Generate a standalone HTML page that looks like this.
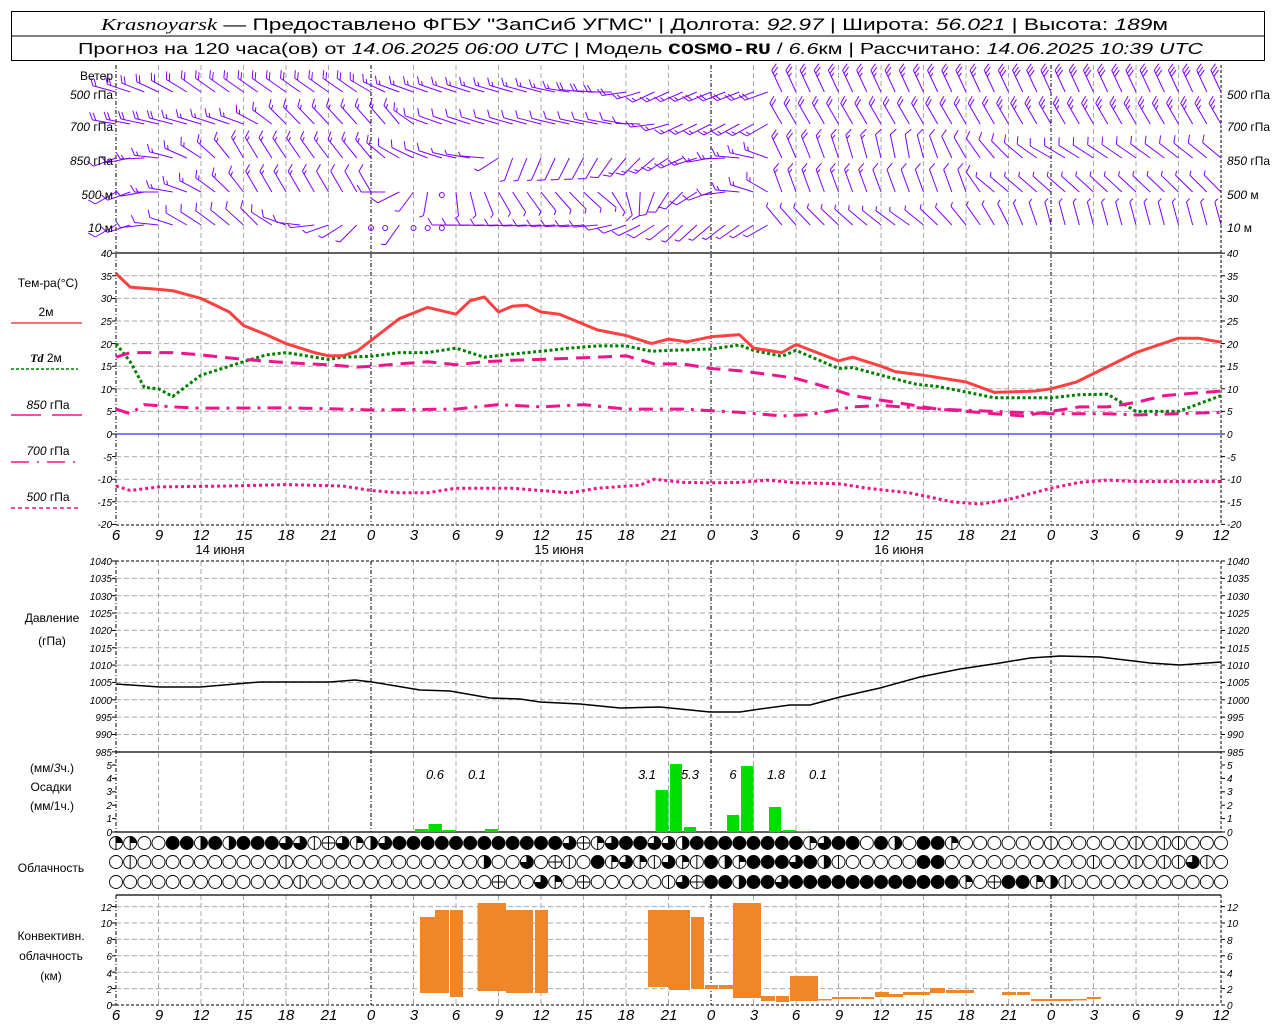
<!DOCTYPE html>
<html><head><meta charset="utf-8"><style>
html,body{margin:0;padding:0;background:#fff;}
svg{display:block;}
text{font-family:"Liberation Sans",sans-serif;fill:#000;}
.ax{font-style:italic;font-size:10px;}
.xl{font-style:italic;font-size:15px;}
.lb{font-size:12px;}
</style></head><body>
<svg id="s" width="1280" height="1024" viewBox="0 0 1280 1024" xmlns="http://www.w3.org/2000/svg">
<rect width="1280" height="1024" fill="#fff"/>
<g id="g"></g>
<!-- header -->
<rect x="11.5" y="11.5" width="1253" height="49" fill="none" stroke="#000"/>
<line x1="11" y1="36" x2="1265" y2="36" stroke="#000"/>
<text x="101" y="30" font-size="17" textLength="1067" lengthAdjust="spacingAndGlyphs"><tspan font-family="Liberation Serif" font-style="italic">Krasnoyarsk</tspan> — Предоставлено ФГБУ "ЗапСиб УГМС" | Долгота: <tspan font-style="italic">92.97</tspan> | Широта: <tspan font-style="italic">56.021</tspan> | Высота: <tspan font-style="italic">189</tspan>м</text>
<text x="78" y="54" font-size="16" textLength="1125" lengthAdjust="spacingAndGlyphs">Прогноз на 120 часа(ов) от <tspan font-style="italic">14.06.2025 06:00 UTC</tspan>  | Модель <tspan font-family="Liberation Mono" font-weight="bold">COSMO-RU</tspan> / <tspan font-style="italic">6.6</tspan>км | Рассчитано: <tspan font-style="italic">14.06.2025 10:39 UTC</tspan></text>

<!-- wind labels -->
<g class="lb" font-size="11">
<text x="113" y="80" text-anchor="end">Ветер</text>
<text x="113" y="99" text-anchor="end"><tspan font-style="italic">500</tspan> гПа</text>
<text x="113" y="131" text-anchor="end"><tspan font-style="italic">700</tspan> гПа</text>
<text x="113" y="165" text-anchor="end"><tspan font-style="italic">850</tspan> гПа</text>
<text x="113" y="199" text-anchor="end"><tspan font-style="italic">500</tspan> м</text>
<text x="113" y="232" text-anchor="end"><tspan font-style="italic">10</tspan>   м</text>
<text x="1227" y="99"><tspan font-style="italic">500</tspan> гПа</text>
<text x="1227" y="131"><tspan font-style="italic">700</tspan> гПа</text>
<text x="1227" y="165"><tspan font-style="italic">850</tspan> гПа</text>
<text x="1227" y="199"><tspan font-style="italic">500</tspan> м</text>
<text x="1227" y="232"><tspan font-style="italic">10</tspan>   м</text>
</g>

<!-- temperature legend -->
<g font-size="12">
<text x="48" y="287" text-anchor="middle">Тем-ра(°С)</text>
<text x="46" y="316" text-anchor="middle">2м</text>
<text x="46" y="362" text-anchor="middle"><tspan font-family="Liberation Serif" font-style="italic" font-weight="bold">Td</tspan>   2м</text>
<text x="48" y="409" text-anchor="middle"><tspan font-style="italic">850</tspan> гПа</text>
<text x="48" y="455" text-anchor="middle"><tspan font-style="italic">700</tspan> гПа</text>
<text x="48" y="501" text-anchor="middle"><tspan font-style="italic">500</tspan> гПа</text>
</g>
<line x1="11" y1="323" x2="82" y2="323" stroke="#ff4040" stroke-width="1.5"/>
<line x1="11" y1="369" x2="78" y2="369" stroke="#008000" stroke-width="1.5" stroke-dasharray="3,2"/>
<line x1="11" y1="415" x2="82" y2="415" stroke="#f0148c" stroke-width="1.5" stroke-dasharray="30,11"/>
<line x1="11" y1="462" x2="78" y2="462" stroke="#f0148c" stroke-width="1.5" stroke-dasharray="18,8,2,8"/>
<line x1="11" y1="508" x2="78" y2="508" stroke="#f0148c" stroke-width="1.5" stroke-dasharray="4,3"/>

<g font-size="12" text-anchor="middle">
<text x="52" y="622">Давление</text>
<text x="52" y="645">(гПа)</text>
<text x="52" y="772">(мм/<tspan font-style="italic">3</tspan>ч.)</text>
<text x="51" y="791">Осадки</text>
<text x="52" y="810">(мм/1ч.)</text>
<text x="51" y="872">Облачность</text>
<text x="51" y="940">Конвективн.</text>
<text x="51" y="960">облачность</text>
<text x="51" y="980">(км)</text>
</g>

<!-- temp axis labels -->
<g class="ax" text-anchor="end">
<text x="112" y="257">40</text><text x="112" y="280">35</text><text x="112" y="302">30</text><text x="112" y="325">25</text><text x="112" y="348">20</text><text x="112" y="370">15</text><text x="112" y="393">10</text><text x="112" y="415">5</text><text x="112" y="438">0</text><text x="112" y="461">-5</text><text x="112" y="483">-10</text><text x="112" y="506">-15</text><text x="112" y="528">-20</text>
</g>
<g class="ax">
<text x="1227" y="257">40</text><text x="1227" y="280">35</text><text x="1227" y="302">30</text><text x="1227" y="325">25</text><text x="1227" y="348">20</text><text x="1227" y="370">15</text><text x="1227" y="393">10</text><text x="1227" y="415">5</text><text x="1227" y="438">0</text><text x="1227" y="461">-5</text><text x="1227" y="483">-10</text><text x="1227" y="506">-15</text><text x="1227" y="528">-20</text>
</g>
<!-- pressure labels -->
<g class="ax" text-anchor="end" font-size="9">
<text x="112" y="565">1040</text><text x="112" y="582">1035</text><text x="112" y="600">1030</text><text x="112" y="617">1025</text><text x="112" y="634">1020</text><text x="112" y="652">1015</text><text x="112" y="669">1010</text><text x="112" y="686">1005</text><text x="112" y="704">1000</text><text x="112" y="721">995</text><text x="112" y="738">990</text><text x="112" y="756">985</text>
</g>
<g class="ax" font-size="9">
<text x="1227" y="565">1040</text><text x="1227" y="582">1035</text><text x="1227" y="600">1030</text><text x="1227" y="617">1025</text><text x="1227" y="634">1020</text><text x="1227" y="652">1015</text><text x="1227" y="669">1010</text><text x="1227" y="686">1005</text><text x="1227" y="704">1000</text><text x="1227" y="721">995</text><text x="1227" y="738">990</text><text x="1227" y="756">985</text>
</g>
<!-- precip labels -->
<g class="ax" text-anchor="end">
<text x="112" y="769">5</text><text x="112" y="782">4</text><text x="112" y="795">3</text><text x="112" y="809">2</text><text x="112" y="822">1</text><text x="112" y="836">0</text>
</g>
<g class="ax">
<text x="1227" y="769">5</text><text x="1227" y="782">4</text><text x="1227" y="795">3</text><text x="1227" y="809">2</text><text x="1227" y="822">1</text><text x="1227" y="836">0</text>
</g>
<g font-style="italic" font-size="13" text-anchor="middle">
<text x="435" y="779">0.6</text><text x="477" y="779">0.1</text><text x="647" y="779">3.1</text><text x="690" y="779">5.3</text><text x="733" y="779">6</text><text x="776" y="779">1.8</text><text x="818" y="779">0.1</text>
</g>
<!-- conv labels -->
<g class="ax" text-anchor="end">
<text x="112" y="911">12</text><text x="112" y="927">10</text><text x="112" y="944">8</text><text x="112" y="960">6</text><text x="112" y="977">4</text><text x="112" y="993">2</text><text x="112" y="1009">0</text>
</g>
<g class="ax">
<text x="1227" y="911">12</text><text x="1227" y="927">10</text><text x="1227" y="944">8</text><text x="1227" y="960">6</text><text x="1227" y="977">4</text><text x="1227" y="993">2</text><text x="1227" y="1009">0</text>
</g>
<!-- x labels -->
<g class="xl" text-anchor="middle">
<text x="116" y="540">6</text><text x="159" y="540">9</text><text x="201" y="540">12</text><text x="244" y="540">15</text><text x="286" y="540">18</text><text x="329" y="540">21</text><text x="371" y="540">0</text><text x="414" y="540">3</text><text x="456" y="540">6</text><text x="499" y="540">9</text><text x="541" y="540">12</text><text x="584" y="540">15</text><text x="626" y="540">18</text><text x="669" y="540">21</text><text x="711" y="540">0</text><text x="754" y="540">3</text><text x="796" y="540">6</text><text x="839" y="540">9</text><text x="881" y="540">12</text><text x="924" y="540">15</text><text x="966" y="540">18</text><text x="1009" y="540">21</text><text x="1051" y="540">0</text><text x="1094" y="540">3</text><text x="1136" y="540">6</text><text x="1179" y="540">9</text><text x="1221" y="540">12</text>
</g>
<g font-size="13" text-anchor="middle">
<text x="220" y="554">14 июня</text><text x="559" y="554">15 июня</text><text x="899" y="554">16 июня</text>
</g>
<g class="xl" text-anchor="middle">
<text x="116" y="1020">6</text><text x="159" y="1020">9</text><text x="201" y="1020">12</text><text x="244" y="1020">15</text><text x="286" y="1020">18</text><text x="329" y="1020">21</text><text x="371" y="1020">0</text><text x="414" y="1020">3</text><text x="456" y="1020">6</text><text x="499" y="1020">9</text><text x="541" y="1020">12</text><text x="584" y="1020">15</text><text x="626" y="1020">18</text><text x="669" y="1020">21</text><text x="711" y="1020">0</text><text x="754" y="1020">3</text><text x="796" y="1020">6</text><text x="839" y="1020">9</text><text x="881" y="1020">12</text><text x="924" y="1020">15</text><text x="966" y="1020">18</text><text x="1009" y="1020">21</text><text x="1051" y="1020">0</text><text x="1094" y="1020">3</text><text x="1136" y="1020">6</text><text x="1179" y="1020">9</text><text x="1221" y="1020">12</text>
</g>
</svg>
<script>
(function(){
var NS="http://www.w3.org/2000/svg",g=document.getElementById("g");
function el(n,a){var e=document.createElementNS(NS,n);for(var k in a)e.setAttribute(k,a[k]);g.appendChild(e);return e;}
function X(h){return 116+h*14.167;}
function ln(x1,y1,x2,y2,c,w,d){var a={x1:x1,y1:y1,x2:x2,y2:y2,stroke:c,"stroke-width":w||1};if(d)a["stroke-dasharray"]=d;return el("line",a);}
var G="#aaa",GD="5,3";
var segs=[[65,525],[561,832],[895,1005]];
for(var h=3;h<78;h+=3){if(h==18||h==42||h==66)continue;segs.forEach(function(s){ln(X(h),s[0],X(h),s[1],G,1,GD);});}
[0,18,42,66].forEach(function(h){segs.forEach(function(s){ln(X(h),s[0],X(h),s[1],"#000",1,"4,2,1,2");});});
segs.forEach(function(s){ln(X(78),s[0],X(78),s[1],"#000",1,"3,2");});
for(var t=35;t>-20;t-=5){var y=434-t*4.52;if(t==0)ln(116,y,1221,y,"#0000ff",1);else ln(116,y,1221,y,G,1,GD);}
ln(116,253,1221,253,"#000",1.2);ln(116,525,1221,525,"#000",1,"3,2");
for(var p=1035;p>985;p-=5){var y=561+(1040-p)*3.47;ln(116,y,1221,y,G,1,GD);}
ln(116,561,1221,561,"#000",1,"3,2");ln(116,752,1221,752,"#000",1.2);
ln(116,832,1221,832,"#000",1.2);
for(var c=2;c<=12;c+=2){var y=1005-c*8.2;ln(116,y,1221,y,G,1,GD);}
ln(116,895,1221,895,"#000",1.2);ln(116,1005,1221,1005,"#000",1,"3,2");
function ticks(vals,x1,x2){vals.forEach(function(y){ln(x1,y,x2,y,"#000",1);});}
var tl=[];for(var t=40;t>=-20;t-=5)tl.push(434-t*4.52);ticks(tl,112,116);ticks(tl,1221,1225);
var pl=[];for(var p=1040;p>=985;p-=5)pl.push(561+(1040-p)*3.47);ticks(pl,112,116);ticks(pl,1221,1225);
var rl=[];for(var r=0;r<=5;r++)rl.push(832-r*13.4);ticks(rl,112,116);ticks(rl,1221,1225);
var cl=[];for(var c=0;c<=12;c+=2)cl.push(1005-c*8.2);ticks(cl,112,116);ticks(cl,1221,1225);
function tline(pts,col,dash){var s=pts.map(function(p){return X(p[0]).toFixed(1)+","+(434-p[1]*4.52).toFixed(1);}).join(" ");var a={points:s,fill:"none",stroke:col,"stroke-width":3,"stroke-linejoin":"round"};if(dash)a["stroke-dasharray"]=dash;el("polyline",a);}
tline([[0,20],[1,16],[2,10.3],[3,10],[4,8.3],[6,13],[9,16],[10.6,17.5],[12,18],[14,17],[15,16.5],[16,17],[18,17.2],[20,18],[22,18],[24,19],[26,17],[28,17.7],[30,18.3],[32,19],[34,19.5],[36,19.5],[37.8,18.3],[39,18.5],[42,18.8],[44,19.7],[45,18.5],[47,17.2],[48,18.5],[51,14.5],[52,14.7],[54,13],[56.5,11],[58,10.5],[60,9.3],[62,8],[66,8],[68,8.7],[70,8.8],[72,5],[75,5],[78,8.5]],"#008000","3,2.5");
tline([[0,17],[1,18],[4,18],[6,17.5],[9,16.5],[12,15.8],[15,15.3],[17,14.8],[18,15],[20,15.5],[22,16],[24,15.3],[26,16],[28,16.3],[30,16.5],[34,17],[36,17.3],[38,15.5],[40,15.5],[42,14.5],[44,14],[46,13.2],[48,12.3],[50,10.5],[52,8.5],[54,7.5],[56,6.5],[58,5.5],[60,5],[62,4.5],[64,4],[66,5],[68,6],[70,6],[72,7],[74,8.5],[76,9],[78,9.5]],"#f0148c","14,8");
tline([[0,5.5],[1,4.5],[2,6.5],[4,6],[6,5.7],[12,5.8],[16,5.5],[18,5.3],[24,5.5],[27,6.5],[30,6],[33,6.5],[36,5.5],[40,5.5],[44,4.8],[47,4],[49,4.3],[52,6],[54,6.3],[58,5.5],[62,5],[66,4.5],[70,4.5],[72,4.2],[75,4.5],[78,4.8]],"#f0148c","14,7,3,7");
tline([[0,-11.5],[1,-12.5],[3,-11.7],[8,-11.5],[12,-11.2],[16,-11.5],[18,-12.5],[20,-13],[22,-13],[24,-12],[28,-12],[30,-12.5],[32,-13],[34,-12],[37,-11.3],[38,-10],[40,-10.7],[42,-10.8],[44,-10.7],[46,-10.2],[48,-10.8],[51,-11],[53,-12],[56,-13],[59,-15],[61,-15.5],[63,-14.5],[66,-12],[68,-10.7],[70,-10.2],[72,-10.5],[74,-10.5],[78,-10.5]],"#f0148c","3,3");
tline([[0,35.5],[1,32.5],[3,32],[4,31.7],[6,30],[8,27],[9,24],[10.6,22],[12,20],[14,18],[15,17.3],[16,17.3],[17,18.3],[18,20.7],[20,25.5],[22,28],[24,26.5],[25,29.5],[26,30.3],[27,27],[28,28.3],[29,28.5],[30,27],[31.3,26.5],[34,23],[36,21.8],[37.8,20],[39,21],[40.3,20.4],[42,21.5],[44,22],[45,19],[47,18],[48,19.8],[51,16.2],[52,17],[54,15],[55,13.8],[57,13],[60,11.5],[62,9.2],[64.8,9.5],[66,10],[67.8,11.5],[72,18],[75,21.2],[76.4,21.2],[78,20.3]],"#ff4040",null);
var pp=[[116,684],[160,687],[200,687],[260,682],[300,682],[330,682],[355,680],[372,682],[420,690],[450,691],[490,698],[520,699],[540,702],[580,704],[620,708],[660,707],[690,710],[710,712],[740,712],[760,709],[790,705],[810,705],[840,697],[880,688],[920,677],[960,669],[1000,663],[1030,658],[1060,656],[1100,657],[1150,663],[1180,665],[1221,662]];
el("polyline",{points:pp.map(function(p){return p.join(",");}).join(" "),fill:"none",stroke:"#000","stroke-width":1.5});
[[415,428,829],[428.5,442,824],[442.5,456,830],[485,498,829],[655.5,668.5,790],[670,682,764],[684,696,827],[727,739,815],[741,753.5,766],[769,781,807],[783,796,830],[797,810,831]].forEach(function(b){el("rect",{x:b[0],y:b[2],width:b[1]-b[0],height:832-b[2],fill:"#00dd00"});});
[[420,435,917,993],[435,449,910,993],[450,463,910,997],[477.5,506,903,991],[506,533,910,993],[535,548,910,993],[648,669,910,987],[669,690,910,990],[691,704,917,989],[705,718,985,989],[719,733,985,989],[733,761,903,998],[761,775,996,1001],[776,789,996,1002],[790,818,976,1001],[818,832,999,1000.5],[832,846,997,999],[846,860,997,999],[861,874,997,999],[875,889,992,997],[889,903,994,997],[903,930,992,995],[930,945,988,993],[946,974,990,993],[1002,1016,992,995],[1017,1030,992,995],[1031,1045,999,1001],[1045,1073,999,1001],[1073,1087,999,1000],[1087,1101,997,999]].forEach(function(b){el("rect",{x:b[0],y:b[2],width:b[1]-b[0],height:Math.max(1.5,b[3]-b[2]),fill:"#f0862a"});});
var rows=[
["qqoo##h#h###tt|etqht############teqt##"+"tth########qt##o#ho##q"+"oooooo|ooooo|o||ooo",843],
["o|oooooooooo|ooooooooooooohootoe|o#qtq"+"|tq|#hq###t#h|ooooo##"+"oooooooooo|oo|o||t|",862],
["ooooooooooooo|oooooooooooooeoo"+"tqoeooooo|"+"te##h##t############qoe##qh|"+"oooooooooooo",882]];
function cs(cx,cy,t){var r=6.5;
 el("circle",{cx:cx,cy:cy,r:r,fill:t=="#"?"#000":"#fff",stroke:"#000","stroke-width":0.9});
 if(t=="h")el("path",{d:"M"+cx+","+(cy-r)+" A"+r+","+r+" 0 0 1 "+cx+","+(cy+r)+"Z",fill:"#000"});
 if(t=="q")el("path",{d:"M"+cx+","+cy+" L"+cx+","+(cy-r)+" A"+r+","+r+" 0 0 1 "+(cx+r)+","+cy+"Z",fill:"#000"});
 if(t=="t")el("path",{d:"M"+cx+","+cy+" L"+cx+","+(cy-r)+" A"+r+","+r+" 0 1 1 "+(cx-r)+","+cy+"Z",fill:"#000"});
 if(t=="|"||t=="h"||t=="q"||t=="t")ln(cx,cy-r,cx,cy+r,"#000",1);
 if(t=="e"){ln(cx-r,cy,cx+r,cy,"#000",1);ln(cx,cy-r,cx,cy+r,"#000",1);}
}
rows.forEach(function(rw){var s=rw[0];for(var i=0;i<79;i++){var c=s.charAt(i)||"o";cs(X(i),rw[1],c);}});
var P="#8000ff";
function interp(k,h){for(var i=0;i<k.length-1;i++){if(h>=k[i][0]&&h<=k[i+1][0]){var f=(h-k[i][0])/((k[i+1][0]-k[i][0])||1);return [k[i][1]+(k[i+1][1]-k[i][1])*f,k[i][2]+(k[i+1][2]-k[i][2])*f];}}return [k[k.length-1][1],k[k.length-1][2]];}
function barb(bx,by,dir,spd){var a=dir*Math.PI/180,ux=Math.sin(a),uy=-Math.cos(a),px=Math.cos(a),py=Math.sin(a),L=24;
 var tx=bx+ux*L,ty=by+uy*L;ln(bx,by,tx,ty,P,1);
 var n=Math.round(spd*2),pos=0;
 while(n>0){var len=n>=2?8:4.5;var sx=tx-ux*pos,sy=ty-uy*pos;ln(sx,sy,sx+len*(px*0.87+ux*0.5),sy+len*(py*0.87+uy*0.5),P,1);n-=n>=2?2:1;pos+=3.5;}
}
var W=[
[92,[[0,285,2],[6,305,2],[17,305,2],[20,290,1.5],[30,285,1.5],[35,270,2],[38,245,1.5],[46,250,2],[47,335,2.5],[78,335,3]],[]],
[124,[[0,280,2],[9,290,1.5],[12,315,1.5],[20,320,1.5],[22,290,1],[36,280,1],[40,245,1.5],[46,240,1.5],[47,330,2],[78,330,2.5]],[]],
[158,[[0,250,1],[4,285,1.5],[9,330,1.5],[18,320,1.5],[20,300,1],[26,275,0.5],[28,200,0.5],[34,210,1],[38,230,1.5],[42,260,1.5],[46,290,1.5],[47,335,2],[56,350,1],[66,300,1],[78,310,1]],[]],
[192,[[0,240,1],[5,290,1.5],[10,330,1.5],[18,330,1],[19,270,1],[22,190,0.5],[27,150,0.5],[34,130,0.5],[38,200,1],[42,250,1],[46,300,1.5],[47,340,1.5],[60,340,1],[62,310,0.5],[78,315,0.5]],[23]],
[225,[[0,240,1],[5,300,1],[10,315,1],[17,225,0.5],[20,215,0.5],[23,270,0.5],[24,270,1],[34,265,1],[36,250,1],[40,225,0.5],[46,240,0.5],[47,320,0.5],[56,305,0.5],[66,345,0.5],[78,345,0.5]],[18,19,21,22,23]]];
W.forEach(function(w){for(var h=0;h<=78;h++){if(w[2].indexOf(h)>=0){el("circle",{cx:X(h),cy:w[0]+3,r:2.5,fill:"none",stroke:P,"stroke-width":1});continue;}var v=interp(w[1],h);barb(X(h),w[0],v[0],v[1]);}});
})();
</script>
</body></html>
